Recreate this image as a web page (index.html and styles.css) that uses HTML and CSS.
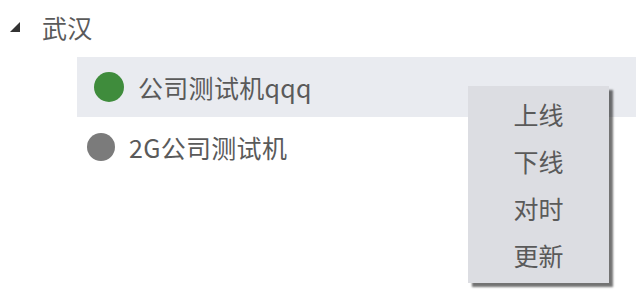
FILE: index.html
```html
<!DOCTYPE html>
<html>
<head>
<meta charset="utf-8">
<link rel="stylesheet" href="styles.css">
</head>
<body>
<div class="tree">
  <div class="root-row">
    <svg class="arrow" width="10" height="10" viewBox="0 0 10 10"><polygon points="0,10 10,0 10,10" fill="#333"/></svg>
    <span class="label">武汉</span>
  </div>
  <div class="children">
    <div class="node selected">
      <span class="dot green"></span>
      <span class="label">公司测试机qqq</span>
    </div>
    <div class="node">
      <span class="dot gray"></span>
      <span class="label">2G公司测试机</span>
    </div>
  </div>
</div>
<div class="menu">
  <div class="item">上线</div>
  <div class="item">下线</div>
  <div class="item">对时</div>
  <div class="item">更新</div>
</div>
</body>
</html>
```
FILE: styles.css
```css
html, body {
  margin: 0;
  padding: 0;
  background: #fff;
  width: 640px;
  height: 308px;
  overflow: hidden;
  font-family: "Noto Sans CJK SC", "Noto Sans", sans-serif;
  color: #5a5a5a;
}
.tree {
  padding-top: 3px;
}
.root-row {
  display: flex;
  align-items: center;
  height: 48px;
  padding-left: 10px;
}
.arrow {
  margin-right: 22px;
  margin-top: 0;
}
.label {
  font-size: 25px;
  line-height: 1;
  letter-spacing: 0.3px;
}
.children {
  margin-left: 77px;
  margin-top: 6px;
}
.node {
  display: flex;
  align-items: center;
  height: 60px;
  width: 559px;
}
.node.selected {
  background: #e9ebf0;
}
.dot {
  display: inline-block;
  border-radius: 50%;
}
.dot.green {
  width: 30px;
  height: 30px;
  background: #3f8c3c;
  margin-left: 17px;
  margin-right: 14px;
}
.dot.gray {
  width: 28px;
  height: 28px;
  background: #7b7b7b;
  margin-left: 10px;
  margin-right: 14px;
}
.menu {
  position: absolute;
  left: 468px;
  top: 86px;
  width: 141px;
  height: 197px;
  background: #dcdde2;
  box-shadow: 4px 4px 2px rgba(0, 0, 0, 0.55);
  padding-top: 4px;
  box-sizing: border-box;
}
.item {
  height: 47px;
  display: flex;
  align-items: center;
  justify-content: center;
  font-size: 25px;
  color: #5a5a5a;
}
```
